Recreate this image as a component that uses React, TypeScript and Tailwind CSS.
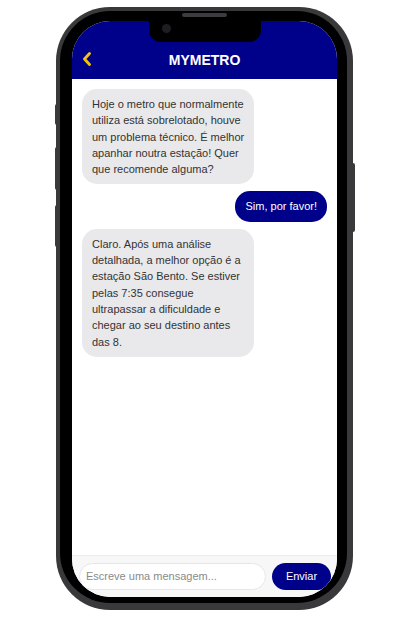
import React from "react";

function Chevron() {
  return (
    <svg width="10" height="14" viewBox="0 0 10 14" className="mt-[-2px] ml-[10px]">
      <polyline points="7.5,1.5 2.5,7 7.5,12.5" fill="none" stroke="#f4c20d" strokeWidth="2.8" strokeLinecap="round" strokeLinejoin="round" />
    </svg>
  );
}

export default function App() {
  return (
    <div className="w-[405px] h-[617px] bg-white pt-[7px] pl-[56px] font-['Liberation_Sans',Arial,sans-serif]">
      <div className="relative w-[297px] h-[603px] rounded-[54px] bg-[#39393b] pt-[4px] pl-[4px] pr-[6px] pb-[7px]">
        {/* side buttons */}
        <div className="absolute left-[-1px] top-[97px] w-[3px] h-[21px] rounded-l-[2px] bg-[#3a3a3c]" />
        <div className="absolute left-[-1px] top-[140px] w-[3px] h-[43px] rounded-l-[2px] bg-[#3a3a3c]" />
        <div className="absolute left-[-1px] top-[198px] w-[3px] h-[42px] rounded-l-[2px] bg-[#3a3a3c]" />
        <div className="absolute right-[-2px] top-[156px] w-[3px] h-[69px] rounded-r-[2px] bg-[#3a3a3c]" />
        <div className="relative h-full rounded-[50px] bg-black pt-[10px] pl-[12px] pr-[10px] pb-[6px]">
          {/* speaker */}
          <div className="absolute top-[2px] left-[122px] w-[45px] h-[4px] rounded-full bg-[#3c3c3e]" />
          <div className="flex h-full flex-col overflow-hidden rounded-[38px] bg-white">
            <div className="relative h-[58px] shrink-0 bg-[#00018b] pt-[30px]">
              {/* notch */}
              <div className="absolute left-[77px] top-0 h-[21px] w-[112px] rounded-b-[12px] bg-black">
                <div className="absolute left-[13px] top-[3px] h-[9px] w-[9px] rounded-full bg-[#1e1e22]" />
              </div>
              <div className="grid grid-cols-[50px_1fr_50px] items-center">
                <Chevron />
                <div className="text-center text-[14px] leading-[18px] font-bold text-white">MYMETRO</div>
                <div />
              </div>
            </div>
            <div className="flex flex-1 flex-col gap-[7px] px-[10px] pt-[10px] text-[11px] leading-[16.3px] text-[#333]">
              <div className="max-w-[172px] self-start rounded-[15px] bg-[#e9e9eb] pl-[10px] pr-[7px] py-[7px]">
                Hoje o metro que normalmente utiliza está sobrelotado, houve um problema técnico. É melhor apanhar noutra estação! Quer que recomende alguma?
              </div>
              <div className="self-end rounded-[15px] bg-[#00018b] px-[10px] py-[7px] text-white">
                Sim, por favor!
              </div>
              <div className="max-w-[172px] self-start rounded-[15px] bg-[#e9e9eb] pl-[10px] pr-[7px] py-[7px]">
                Claro. Após uma análise detalhada, a melhor opção é a estação São Bento. Se estiver pelas 7:35 consegue ultrapassar a dificuldade e chegar ao seu destino antes das 8.
              </div>
            </div>
            <div className="flex h-[42px] shrink-0 items-start gap-[6px] border-t border-[#ececec] bg-[#f7f7f8] pl-[7px] pr-[6px] pt-[7px]">
              <div className="flex h-[27px] flex-1 items-center rounded-full border border-[#e6e6e6] bg-white px-[6px] text-[11px] text-[#8a8a8a]">
                Escreve uma mensagem...
              </div>
              <div className="flex h-[27px] w-[59px] items-center justify-center rounded-full bg-[#00018b] text-[11px] text-white">
                Enviar
              </div>
            </div>
          </div>
        </div>
      </div>
    </div>
  );
}
